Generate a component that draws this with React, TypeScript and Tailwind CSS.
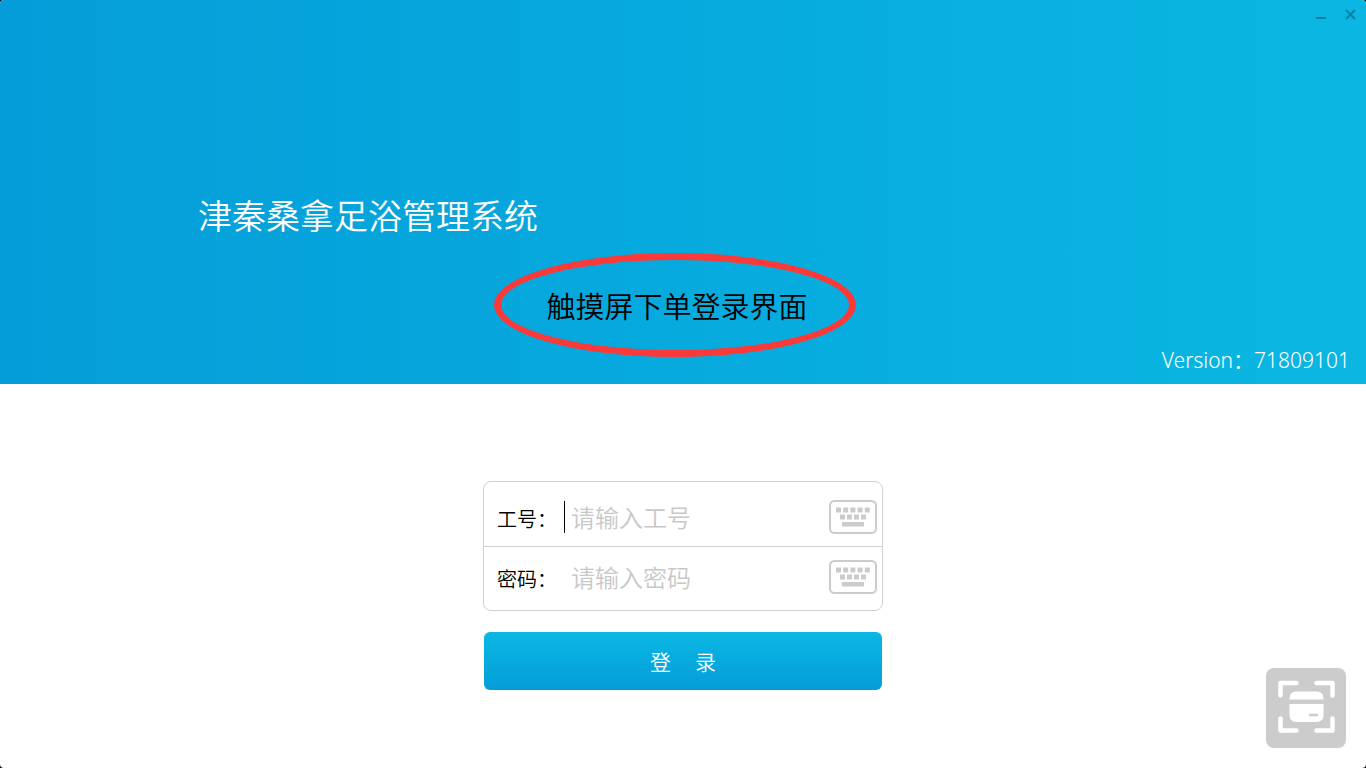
import { useState } from 'react';

type FieldProps = {
  id: string;
  label: string;
  type: string;
  placeholder: string;
  value: string;
  onChange: (value: string) => void;
  active?: boolean;
};

const KeyboardIcon = () => (
  <svg width="48" height="34" viewBox="0 0 48 34" fill="none" aria-hidden="true">
    <rect x="1" y="1" width="46" height="32" rx="4.5" stroke="#cbcbcb" strokeWidth="2" />
    <g fill="#cbcbcb">
      {[7, 14.2, 21.4, 28.6, 35.8].map((x) => (
        <rect key={x} x={x} y="7.5" width="5" height="5" />
      ))}
      {[11, 18, 25, 32].map((x) => (
        <rect key={x} x={x} y="14.5" width="5" height="5" />
      ))}
      <rect x="13" y="22" width="22" height="4.5" />
    </g>
  </svg>
);

const ScanCardIcon = () => (
  <svg width="80" height="80" viewBox="0 0 80 80" fill="none" aria-hidden="true">
    <g stroke="#fff" strokeWidth="4.5" strokeLinecap="round" strokeLinejoin="round">
      <path d="M14.5 27.5V15h16M50.5 15h16v12.5M14.5 50.5v12h16M50.5 62.5h16v-12" />
    </g>
    <path d="M23.500 31.500v-1q0-7 7-7h20q7 0 7 7v1z" fill="#fff" />
    <path d="M23.500 36h34v11q0 7-7 7h-20q-7 0-7-7z" fill="#fff" />
    <path d="M44 47h7" stroke="#ccc" strokeWidth="2.5" strokeLinecap="round" />
  </svg>
);

const Field = ({ id, label, type, placeholder, value, onChange, active }: FieldProps) => (
  <div className="flex h-full items-center pr-[5px] pl-[13px]">
    <label htmlFor={id} className="w-[67px] shrink-0 pt-1.5 text-xl text-black">
      {label}：
    </label>
    {/* Cursor del campo activo */}
    <span className={active ? 'h-8 w-px bg-black' : 'h-8 w-px'} />
    <input
      id={id}
      type={type}
      value={value}
      onChange={(e) => onChange(e.target.value)}
      placeholder={placeholder}
      className="min-w-0 flex-1 bg-transparent pt-0.5 pl-1.5 text-2xl text-black outline-none placeholder:text-[#c8c8c8]"
    />
    <button type="button" aria-label={`${label} 键盘`} className="shrink-0">
      <KeyboardIcon />
    </button>
  </div>
);

const App = () => {
  const [usuario, setUsuario] = useState('');
  const [clave, setClave] = useState('');

  return (
    <div className="min-h-screen bg-black font-['Noto_Sans','Noto_Sans_CJK_SC',sans-serif] font-[350]">
      <div className="relative min-h-screen overflow-hidden rounded-sm bg-white">
        {/* Cabecera */}
        <header className="relative flex h-[50vh] min-h-80 flex-col bg-linear-to-r from-[#059dd9] to-[#0bb7e2]">
          <div className="flex h-8 items-start justify-end gap-4 pt-2 pr-2.5 text-[#087f9f]">
            <button type="button" aria-label="最小化">
              <svg width="12" height="12" viewBox="0 0 12 12" aria-hidden="true">
                <path d="M0 10h10" stroke="currentColor" strokeWidth="2" />
              </svg>
            </button>
            <button type="button" aria-label="关闭">
              <svg width="12" height="12" viewBox="0 0 12 12" aria-hidden="true">
                <path d="M2 2l9 9M11 2l-9 9" stroke="currentColor" strokeWidth="1.8" />
              </svg>
            </button>
          </div>
          <h1 className="mt-auto mb-[148px] pl-[198px] text-[34px] leading-10 text-white">津秦桑拿足浴管理系统</h1>
          <div className="absolute inset-x-0 bottom-[27px] flex justify-center pr-4">
            <p className="flex h-[104px] w-[362px] items-center justify-center rounded-[50%] border-[7px] border-[#fa3a38] pt-1 pl-1 text-[29px] text-black">
              触摸屏下单登录界面
            </p>
          </div>
          <p className="absolute right-4 bottom-2 text-[21px] leading-8 text-white">Version：71809101</p>
        </header>

        {/* Formulario de acceso */}
        <form className="mx-auto mt-[97px] w-[400px]" onSubmit={(e) => e.preventDefault()}>
          <div className="rounded-lg border border-[#d0d0d0] pt-[5px] pb-[3px]">
            <div className="h-[60px] border-b border-[#d0d0d0]">
              <Field id="usuario" label="工号" type="text" placeholder="请输入工号" value={usuario} onChange={setUsuario} active />
            </div>
            <div className="h-[60px]">
              <Field id="clave" label="密码" type="password" placeholder="请输入密码" value={clave} onChange={setClave} />
            </div>
          </div>
          <div className="px-px pt-[21px]">
            <button
              type="submit"
              className="flex h-[58px] w-full items-center justify-center gap-6 rounded-md bg-linear-to-b from-[#0bb7e2] to-[#059dd9] pt-1 text-[21px] text-white"
            >
              <span>登</span>
              <span>录</span>
            </button>
          </div>
        </form>

        <button type="button" aria-label="扫描卡片" className="absolute right-5 bottom-5 rounded-lg bg-[#ccc]">
          <ScanCardIcon />
        </button>
      </div>
    </div>
  );
};

export default App;
